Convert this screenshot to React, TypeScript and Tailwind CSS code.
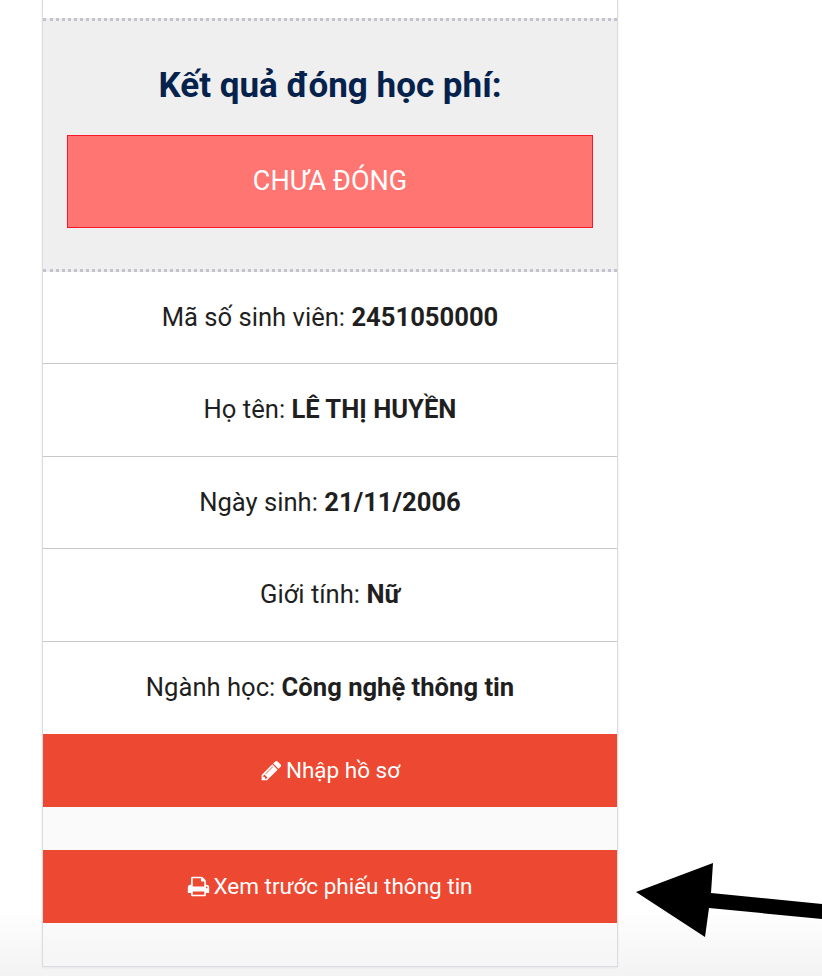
const rows = [
  { label: "Mã số sinh viên:", value: "2451050000", height: "h-[92px]" },
  { label: "Họ tên:", value: "LÊ THỊ HUYỀN", height: "h-[93px] pb-[2px]" },
  { label: "Ngày sinh:", value: "21/11/2006", height: "h-[92px]" },
  { label: "Giới tính:", value: "Nữ", height: "h-[93px] pb-[2px]" },
  { label: "Ngành học:", value: "Công nghệ thông tin", height: "h-[92px] pb-[2px]" },
];

function PencilIcon() {
  return (
    <svg className="size-[23px]" viewBox="0 0 1792 1792" fill="currentColor">
      <path d="M491 1536l91-91-235-235-91 91v107h128v128h107zm523-928q0-22-22-22-10 0-17 7l-542 542q-7 7-7 17 0 22 22 22 10 0 17-7l542-542q7-7 7-17zm-54-192l416 416-832 832h-416v-416zm683 96q0 53-37 90l-166 166-416-416 166-165q36-38 90-38 53 0 91 38l235 234q37 39 37 91z" />
    </svg>
  );
}

function PrintIcon() {
  return (
    <svg className="size-[23px]" viewBox="0 0 1792 1792" fill="currentColor">
      <path d="M448 1536h896v-256h-896v256zm0-640h896v-384h-160q-40 0-68-28t-28-68v-160h-640v640zm1152 64q0-26-19-45t-45-19-45 19-19 45 19 45 45 19 45-19 19-45zm128 0v416q0 13-9.5 22.5t-22.5 9.5h-224v160q0 40-28 68t-68 28h-960q-40 0-68-28t-28-68v-160h-224q-13 0-22.5-9.5t-9.5-22.5v-416q0-79 56.5-135.5t135.5-56.5h64v-544q0-40 28-68t68-28h672q40 0 88 20t76 48l152 152q28 28 48 76t20 88v256h64q79 0 135.5 56.5t56.5 135.5z" />
    </svg>
  );
}

export default function App() {
  return (
    <div className="relative h-[976px] overflow-hidden bg-[linear-gradient(to_bottom,#ffffff_93%,#f3f3f4_100%)] font-['Roboto',sans-serif]">
      <div className="ml-[42px] h-[967px] w-[576px] border-x border-b border-[#dcdce0] bg-white pt-[18px] shadow-[0_1px_2px_#e6e6ea]">
        <div className="flex h-[254px] flex-col items-center border-y-[3px] border-dotted border-[#c4c2cc] bg-[#efefef] bg-[radial-gradient(#e9e9e9_0.6px,transparent_0.6px)] bg-[size:4px_4px] px-6">
          <h2 className="mt-[43px] text-[35px] font-bold leading-[44px] text-[#04224c]">Kết quả đóng học phí:</h2>
          <div className="mt-[27px] flex h-[93px] w-full items-center justify-center border border-[#f8182a] bg-[#fe7572] text-[27px] text-white">
            CHƯA ĐÓNG
          </div>
        </div>
        {rows.map((row, i) => (
          <div
            key={row.label}
            className={`flex items-center justify-center text-[25.6px] text-[#1f1f22] ${row.height} ${i < rows.length - 1 ? "border-b border-[#c9c9c9]" : ""}`}
          >
            <span>
              {row.label} <b>{row.value}</b>
            </span>
          </div>
        ))}
        <div className="h-[232px] bg-[linear-gradient(to_bottom,#fafafa_80%,#f5f5f6_100%)]">
          <button className="flex h-[73px] w-full items-center justify-center gap-[3px] bg-[#ec4832] text-[22.5px] text-white">
            <PencilIcon />
            Nhập hồ sơ
          </button>
          <button className="mt-[43px] flex h-[73px] w-full items-center justify-center gap-[3px] bg-[#ec4832] text-[22.5px] text-white">
            <PrintIcon />
            Xem trước phiếu thông tin
          </button>
        </div>
      </div>
      <svg className="absolute left-0 top-0" width="822" height="976" viewBox="0 0 822 976">
        <polygon points="636,892 713,863 711,893 822,904 822,919 709,908 705,937" fill="#000" />
      </svg>
    </div>
  );
}
